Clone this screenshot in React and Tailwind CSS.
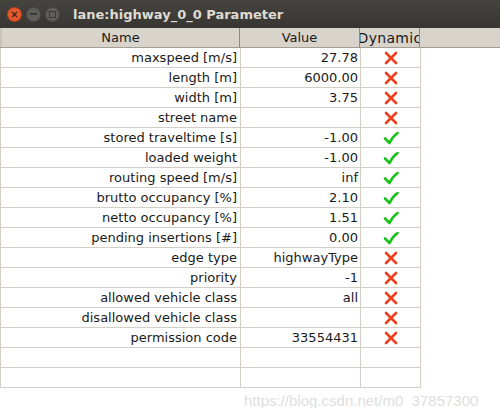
import React from 'react';

const rows = [
  { name: 'maxspeed [m/s]', value: '27.78', dyn: false },
  { name: 'length [m]', value: '6000.00', dyn: false },
  { name: 'width [m]', value: '3.75', dyn: false },
  { name: 'street name', value: '', dyn: false },
  { name: 'stored traveltime [s]', value: '-1.00', dyn: true },
  { name: 'loaded weight', value: '-1.00', dyn: true },
  { name: 'routing speed [m/s]', value: 'inf', dyn: true },
  { name: 'brutto occupancy [%]', value: '2.10', dyn: true },
  { name: 'netto occupancy [%]', value: '1.51', dyn: true },
  { name: 'pending insertions [#]', value: '0.00', dyn: true },
  { name: 'edge type', value: 'highwayType', dyn: false },
  { name: 'priority', value: '-1', dyn: false },
  { name: 'allowed vehicle class', value: 'all', dyn: false },
  { name: 'disallowed vehicle class', value: '', dyn: false },
  { name: 'permission code', value: '33554431', dyn: false },
  null,
  null,
];

function Cross() {
  return (
    <svg width="14" height="14" viewBox="0 0 14 14">
      <path d="M2 2 L12 12 M12 2 L2 12" stroke="#f23d1a" strokeWidth="2.6" strokeLinecap="round" />
    </svg>
  );
}

function Check() {
  return (
    <svg width="16" height="16" viewBox="0 0 16 16">
      <path d="M2 8.5 L6.5 13 C8.5 8.5 11 5.5 14.5 3" stroke="#19c019" strokeWidth="2.6" fill="none" strokeLinecap="round" strokeLinejoin="round" />
    </svg>
  );
}

export default function App() {
  return (
    <div className="w-[500px] h-[408px] bg-white overflow-hidden relative" style={{ fontFamily: '"DejaVu Sans", sans-serif' }}>
      {/* title bar */}
      <div className="h-[28px] flex items-center bg-gradient-to-b from-[#45443f] to-[#373632] pl-[7px]">
        <div className="w-[15px] h-[15px] rounded-full bg-[#e9562a] border border-[#b8401c] flex items-center justify-center">
          <svg width="7" height="7" viewBox="0 0 7 7"><path d="M1 1 L6 6 M6 1 L1 6" stroke="#3a2a22" strokeWidth="1.4" /></svg>
        </div>
        <div className="w-[15px] h-[15px] rounded-full bg-[#5f5e59] border border-[#4a4945] ml-[4px] flex items-center justify-center">
          <div className="w-[7px] h-[2px] bg-[#3a3935]" />
        </div>
        <div className="w-[15px] h-[15px] rounded-full bg-[#5f5e59] border border-[#4a4945] ml-[4px] flex items-center justify-center">
          <div className="w-[7px] h-[7px] border-[1.5px] border-[#3a3935]" />
        </div>
        <div className="ml-[13px] text-[13px] font-bold text-[#dfdbd2] leading-none">lane:highway_0_0 Parameter</div>
      </div>

      {/* header */}
      <div className="flex h-[20px] bg-[#d8d4cc] border-b border-[#a29e96] text-[13px] text-[#1a1a1a] leading-none">
        <div className="w-[240px] flex items-center justify-center border-r border-[#8e8a83] border-l-[2px] border-l-[#c8c4bc]">Name</div>
        <div className="w-[120px] flex items-center justify-center border-r border-[#8e8a83]">Value</div>
        <div className="w-[60px] flex items-center justify-center border-r border-[#8e8a83] overflow-hidden whitespace-nowrap">
          <span className="shrink-0 text-[14px] tracking-[0.3px]">Dynamic</span>
        </div>
        <div className="flex-1" />
      </div>

      {/* body */}
      <div className="w-[421px] border-l border-[#d3cfc7]">
        {rows.map((r, i) => (
          <div key={i} className="grid grid-cols-[240px_120px_60px] h-[20px] border-b border-[#d3cfc7] text-[13px] text-[#1a1a1a] leading-none">
            <div className="flex items-center justify-end pr-[3px] border-r border-[#d3cfc7] whitespace-nowrap">{r ? r.name : ''}</div>
            <div className="flex items-center justify-end pr-[2px] border-r border-[#d3cfc7] whitespace-nowrap">{r ? r.value : ''}</div>
            <div className="flex items-center justify-center border-r border-[#d3cfc7]">
              {r ? (r.dyn ? <Check /> : <Cross />) : null}
            </div>
          </div>
        ))}
      </div>

      <div className="absolute left-[244px] top-[390px] text-[15px] text-[#dedede] whitespace-nowrap" style={{ fontFamily: '"Liberation Sans", sans-serif' }}>
        https://blog.csdn.net/m0_37857300
      </div>
    </div>
  );
}
